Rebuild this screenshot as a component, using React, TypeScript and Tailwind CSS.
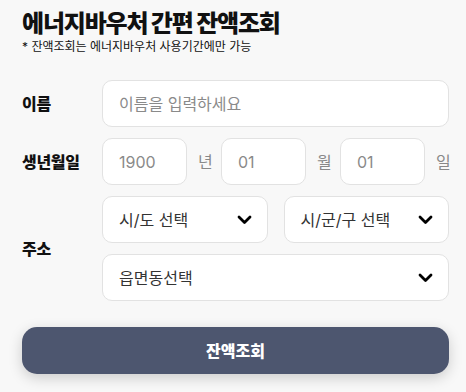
const font = "font-['Inter','Noto_Sans_CJK_KR',sans-serif]";

function Chevron() {
    return (
        <svg width="15" height="10" viewBox="0 0 15 10" fill="none">
            <path d="M2 2 L7.5 7.5 L13 2" stroke="#000" strokeWidth="2.8" strokeLinecap="round" strokeLinejoin="round" />
        </svg>
    );
}

function Select({ label, className = "" }: { label: string; className?: string }) {
    return (
        <div className={`h-[47px] bg-white border border-[#e2e2e2] rounded-[10px] flex items-center justify-between pl-4 pr-[15px] ${className}`}>
            <span className="text-[16px] text-[#333]">{label}</span>
            <Chevron />
        </div>
    );
}

function DateBox({ value, suffix, last }: { value: string; suffix: string; last?: boolean }) {
    return (
        <>
            <div className="flex-1 h-[47px] bg-white border border-[#e2e2e2] rounded-[10px] flex items-center pl-4 text-[16px] text-[#8a8a8a]">
                {value}
            </div>
            <span className={`ml-[11px] ${last ? "" : "mr-[10px]"} w-[13px] text-[16px] text-[#888]`}>{suffix}</span>
        </>
    );
}

export default function App() {
    return (
        <div className={`w-[466px] h-[392px] bg-[#f8f8f8] pl-[22px] pr-[17px] pt-[9px] ${font}`}>
            <h1 className="text-[24px] leading-[30px] font-black text-[#111] tracking-[-0.05em]">에너지바우처 간편 잔액조회</h1>
            <p className="text-[12px] leading-[16px] text-[#111]">* 잔액조회는 에너지바우처 사용기간에만 가능</p>

            <div className="mt-[25px] flex items-center">
                <div className="w-[80px] text-[16px] font-black text-[#111] tracking-[-0.02em]">이름</div>
                <div className="flex-1 h-[47px] bg-white border border-[#e2e2e2] rounded-[10px] flex items-center pl-4 text-[16px] text-[#8a8a8a]">
                    이름을 입력하세요
                </div>
            </div>

            <div className="mt-[11px] flex items-center">
                <div className="w-[80px] text-[16px] font-black text-[#111] tracking-[-0.02em]">생년월일</div>
                <div className="flex-1 flex items-center">
                    <DateBox value="1900" suffix="년" />
                    <DateBox value="01" suffix="월" />
                    <DateBox value="01" suffix="일" last />
                </div>
            </div>

            <div className="mt-[11px] flex items-center">
                <div className="w-[80px] text-[16px] font-black text-[#111] tracking-[-0.02em]">주소</div>
                <div className="flex-1 flex flex-col gap-[11px]">
                    <div className="flex gap-4">
                        <Select label="시/도 선택" className="flex-1" />
                        <Select label="시/군/구 선택" className="flex-1" />
                    </div>
                    <Select label="읍면동선택" />
                </div>
            </div>

            <button className="mt-[26px] w-full h-[47px] rounded-[15px] bg-[#4d566f] text-white text-[16px] font-black shadow-[0_4px_14px_rgba(0,0,0,0.18)]">
                잔액조회
            </button>
        </div>
    );
}
